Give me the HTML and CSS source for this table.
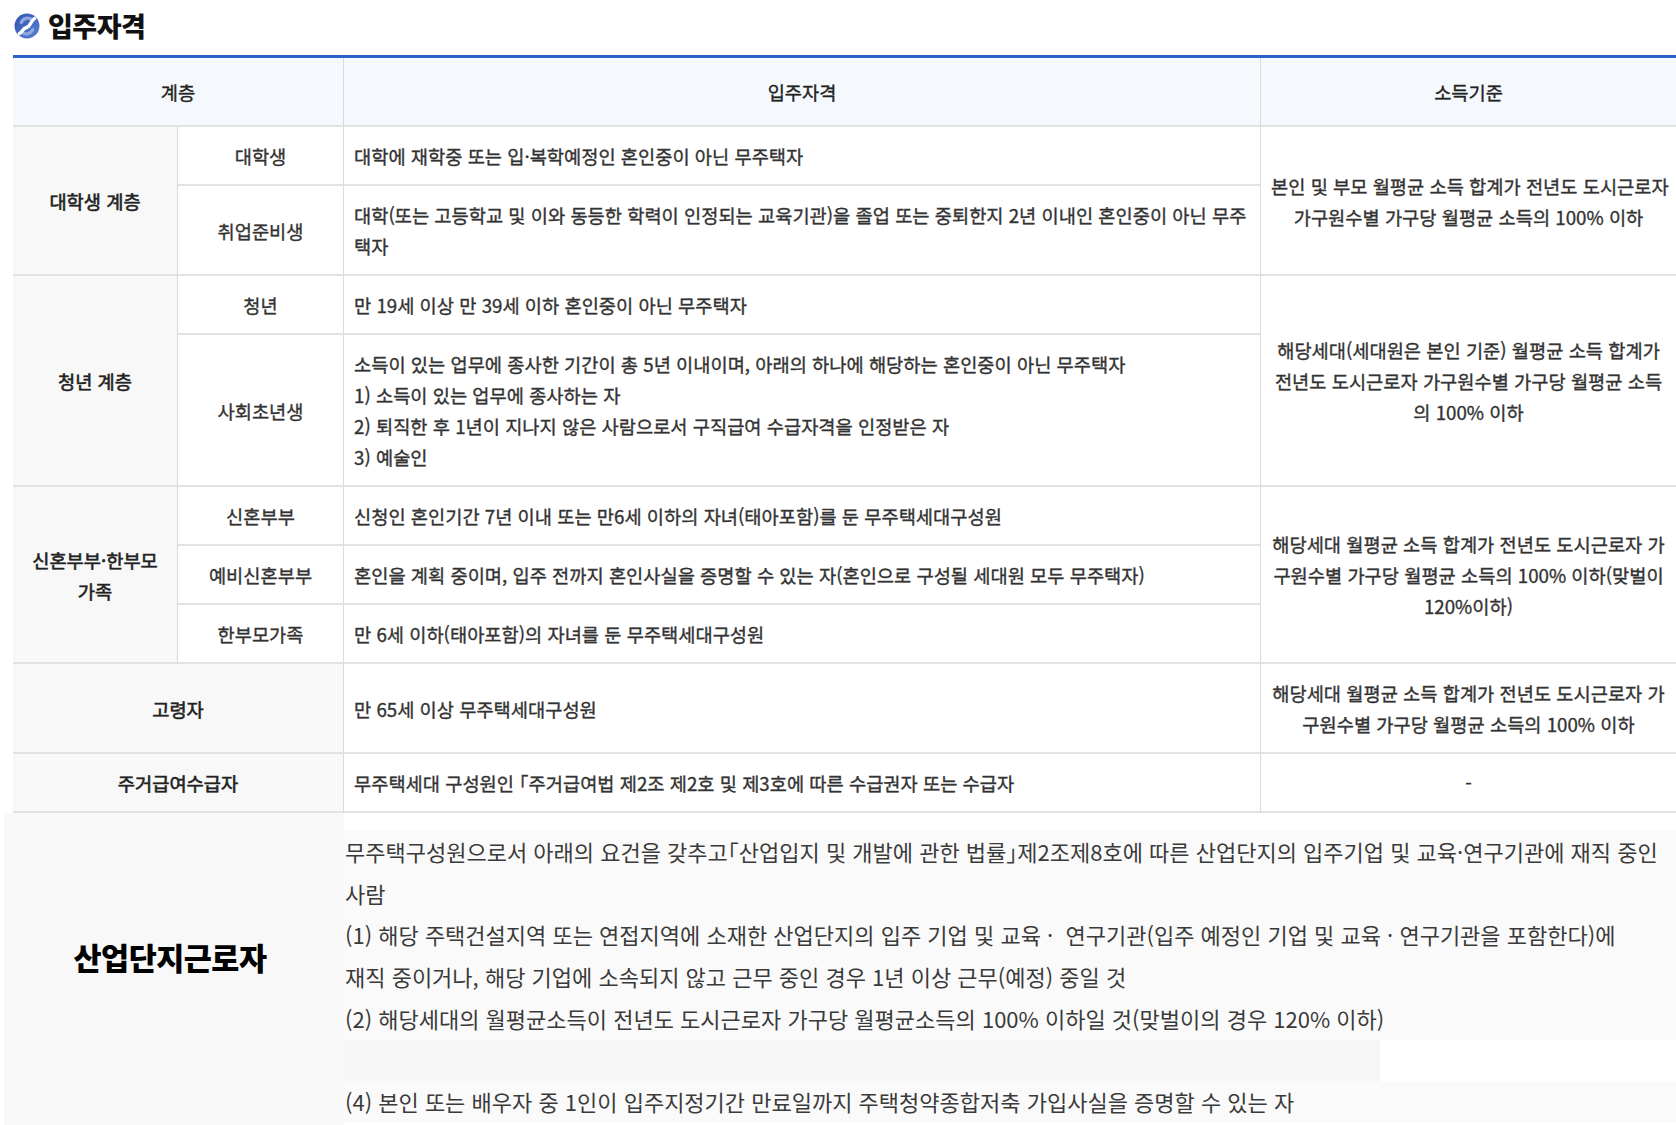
FILE: index.html
```html
<!DOCTYPE html>
<html lang="ko">
<head>
<meta charset="utf-8">
<title>입주자격</title>
<link rel="stylesheet" href="styles.css">
</head>
<body>
<div class="page">
  <h2 class="title">
    <svg class="title-icon" viewBox="0 0 26 26" width="26" height="26" aria-hidden="true">
      <defs>
        <linearGradient id="ig" x1="0" y1="0" x2="1" y2="1">
          <stop offset="0" stop-color="#2f55b3"/>
          <stop offset="1" stop-color="#5a7fcf"/>
        </linearGradient>
      </defs>
      <circle cx="13" cy="13" r="12.5" fill="url(#ig)"/>
      <path d="M7.2 9.6 A7 7 0 0 1 17.8 6.4" fill="none" stroke="#8fa8e0" stroke-width="3.2" stroke-linecap="round"/>
      <path d="M18.8 16.4 A7 7 0 0 1 8.2 19.6" fill="none" stroke="#8fa8e0" stroke-width="3.2" stroke-linecap="round"/>
      <path d="M20.5 5.5 C15 10 17 13.5 12.5 14.5 C8.5 15.4 9.5 18 5.5 20.5" fill="none" stroke="#ffffff" stroke-width="3.4" stroke-linecap="round"/>
    </svg>
    <span>입주자격</span>
  </h2>

  <table class="qual">
    <colgroup>
      <col class="c1"><col class="c2"><col class="c3"><col class="c4">
    </colgroup>
    <thead>
      <tr>
        <th colspan="2">계층</th>
        <th>입주자격</th>
        <th class="last">소득기준</th>
      </tr>
    </thead>
    <tbody>
      <tr>
        <td rowspan="2" class="grp">대학생 계층</td>
        <td class="sub">대학생</td>
        <td class="desc">대학에 재학중 또는 입·복학예정인 혼인중이 아닌 무주택자</td>
        <td rowspan="2" class="inc last">본인 및 부모 월평균 소득 합계가 전년도 도시근로자<br>가구원수별 가구당 월평균 소득의 100% 이하</td>
      </tr>
      <tr>
        <td class="sub">취업준비생</td>
        <td class="desc">대학(또는 고등학교 및 이와 동등한 학력이 인정되는 교육기관)을 졸업 또는 중퇴한지 2년 이내인 혼인중이 아닌 무주<br>택자</td>
      </tr>
      <tr>
        <td rowspan="2" class="grp">청년 계층</td>
        <td class="sub">청년</td>
        <td class="desc">만 19세 이상 만 39세 이하 혼인중이 아닌 무주택자</td>
        <td rowspan="2" class="inc last">해당세대(세대원은 본인 기준) 월평균 소득 합계가<br>전년도 도시근로자 가구원수별 가구당 월평균 소득<br>의 100% 이하</td>
      </tr>
      <tr>
        <td class="sub">사회초년생</td>
        <td class="desc">소득이 있는 업무에 종사한 기간이 총 5년 이내이며, 아래의 하나에 해당하는 혼인중이 아닌 무주택자<br>1) 소득이 있는 업무에 종사하는 자<br>2) 퇴직한 후 1년이 지나지 않은 사람으로서 구직급여 수급자격을 인정받은 자<br>3) 예술인</td>
      </tr>
      <tr>
        <td rowspan="3" class="grp">신혼부부·한부모<br>가족</td>
        <td class="sub">신혼부부</td>
        <td class="desc">신청인 혼인기간 7년 이내 또는 만6세 이하의 자녀(태아포함)를 둔 무주택세대구성원</td>
        <td rowspan="3" class="inc last">해당세대 월평균 소득 합계가 전년도 도시근로자 가<br>구원수별 가구당 월평균 소득의 100% 이하(맞벌이<br>120%이하)</td>
      </tr>
      <tr>
        <td class="sub">예비신혼부부</td>
        <td class="desc">혼인을 계획 중이며, 입주 전까지 혼인사실을 증명할 수 있는 자(혼인으로 구성될 세대원 모두 무주택자)</td>
      </tr>
      <tr>
        <td class="sub">한부모가족</td>
        <td class="desc">만 6세 이하(태아포함)의 자녀를 둔 무주택세대구성원</td>
      </tr>
      <tr>
        <td colspan="2" class="grp">고령자</td>
        <td class="desc">만 65세 이상 무주택세대구성원</td>
        <td class="inc last">해당세대 월평균 소득 합계가 전년도 도시근로자 가<br>구원수별 가구당 월평균 소득의 100% 이하</td>
      </tr>
      <tr>
        <td colspan="2" class="grp">주거급여수급자</td>
        <td class="desc">무주택세대 구성원인 「주거급여법 제2조 제2호 및 제3호에 따른 수급권자 또는 수급자</td>
        <td class="inc last">-</td>
      </tr>
    </tbody>
  </table>

  <div class="extra">
    <div class="extra-label">산업단지근로자</div>
    <div class="extra-body">
      <div class="blk">
        <span class="ln">무주택구성원으로서 아래의 요건을 갖추고「산업입지 및 개발에 관한 법률」제2조제8호에 따른 산업단지의 입주기업 및 교육·연구기관에 재직 중인</span>
        <span class="ln">사람</span>
        <span class="ln">(1) 해당 주택건설지역 또는 연접지역에 소재한 산업단지의 입주 기업 및 교육 ·&nbsp; 연구기관(입주 예정인 기업 및 교육 · 연구기관을 포함한다)에</span>
        <span class="ln">재직 중이거나, 해당 기업에 소속되지 않고 근무 중인 경우 1년 이상 근무(예정) 중일 것</span>
        <span class="ln">(2) 해당세대의 월평균소득이 전년도 도시근로자 가구당 월평균소득의 100% 이하일 것(맞벌이의 경우 120% 이하)</span>
      </div>
      <div class="gap"></div>
      <div class="blk">
        <span class="ln">(4) 본인 또는 배우자 중 1인이 입주지정기간 만료일까지 주택청약종합저축 가입사실을 증명할 수 있는 자</span>
      </div>
    </div>
  </div>
</div>
</body>
</html>
```

FILE: styles.css
```css
html, body {
  margin: 0;
  padding: 0;
  background: #ffffff;
}

body {
  font-family: "Noto Sans CJK KR", "Noto Sans", sans-serif;
  color: #333333;
  overflow: hidden;
}

.page {
  width: 1676px;
  height: 1125px;
  overflow: hidden;
}

.title {
  margin: 0;
  height: 51px;
  padding-left: 14px;
  padding-bottom: 4px;
  display: flex;
  align-items: center;
  gap: 8px;
  font-size: 27px;
  font-weight: 900;
  color: #111111;
  letter-spacing: -0.5px;
}

.title-icon {
  display: block;
  flex: none;
}

.qual {
  margin-left: 13px;
  width: 1663px;
  table-layout: fixed;
  border-collapse: separate;
  border-spacing: 0;
  border-top: 3px solid #2c63c7;
  font-size: 18.7px;
  line-height: 31px;
  font-weight: 400;
  font-feature-settings: "halt";
  -webkit-text-stroke: 0.35px currentColor;
}

.c1 { width: 165px; }
.c2 { width: 166px; }
.c3 { width: 917px; }
.c4 { width: 415px; }

.qual th,
.qual td {
  border-bottom: 2px solid #e2e2e2;
  border-right: 1px solid #dadada;
  padding: 13px 10px;
  vertical-align: middle;
}

.qual th {
  background: #f5f9fd;
  padding-top: 18px;
  padding-bottom: 18px;
  font-weight: 400;
  color: #222222;
  text-align: center;
}

.qual .last {
  border-right: none;
}

.grp {
  background: #f8f8f8;
  text-align: center;
  color: #222222;
  font-weight: 400;
  padding-left: 2px;
  padding-right: 2px;
  -webkit-text-stroke: 0.6px currentColor;
}

.sub {
  text-align: center;
  color: #333333;
}

.desc {
  text-align: left;
  color: #333333;
  white-space: nowrap;
}

.inc {
  text-align: center;
  white-space: nowrap;
  padding-left: 2px;
  padding-right: 2px;
  color: #333333;
}

.extra {
  display: flex;
  margin-left: 4px;
}

.extra-label {
  width: 332px;
  flex: none;
  height: 288px;
  padding: 0 8px 24px 0;
  background: #f8f8f8;
  display: flex;
  align-items: center;
  justify-content: center;
  font-size: 30.5px;
  font-weight: 900;
  color: #000000;
  letter-spacing: -0.5px;
}

.extra-body {
  flex: 1;
  padding-top: 18px;
  font-size: 22px;
  line-height: 41.7px;
  font-weight: 400;
  color: #3a3a3a;
  font-feature-settings: "halt";
}

.blk {
  background: #fafafa;
  padding-left: 1px;
}

.ln {
  display: block;
  white-space: nowrap;
}

.gap {
  height: 41.7px;
  width: 1036px;
  background: #f6f6f6;
}
```
